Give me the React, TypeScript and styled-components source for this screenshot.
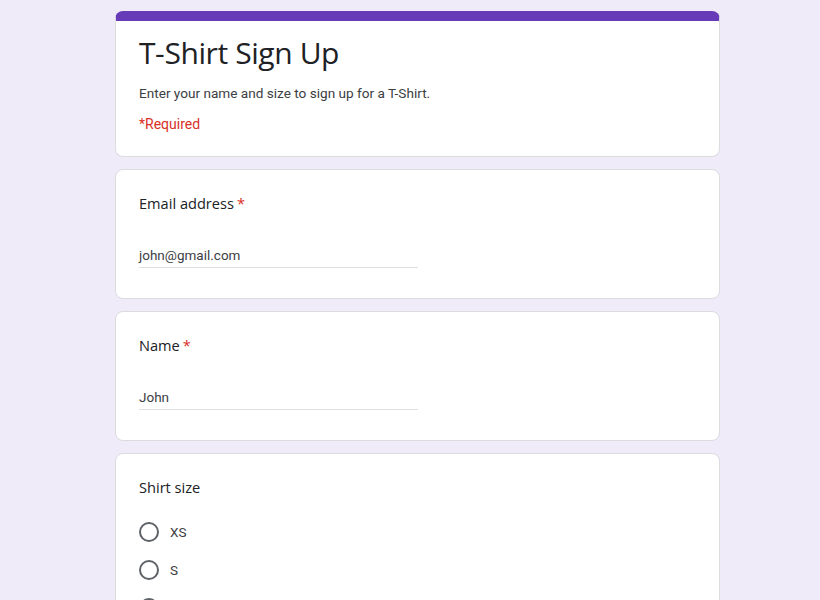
import React from "react";
import styled, { createGlobalStyle } from "styled-components";

const Global = createGlobalStyle`
  html, body { margin: 0; padding: 0; background: #f0ebf8; }
  body { font-family: Roboto, "Liberation Sans", sans-serif; color: #202124; }
`;

const Page = styled.div`
  display: flex;
  flex-direction: column;
  align-items: center;
  gap: 12px;
  padding: 11px 0 24px 15px;
  min-height: 600px;
  box-sizing: border-box;
`;

const Card = styled.div`
  width: 605px;
  box-sizing: border-box;
  background: #fff;
  border: 1px solid #dadce0;
  border-radius: 8px;
  padding: 21px 23px 30px;
`;

const HeaderCard = styled.div`
  width: 605px;
  box-sizing: border-box;
  background: #fff;
  border: 1px solid #dadce0;
  border-top: 10px solid #673ab7;
  border-radius: 8px;
  padding: 12px 23px 22px;
`;

const Title = styled.h1`
  margin: 0;
  font-family: "Open Sans", Roboto, sans-serif;
  font-weight: 400;
  font-size: 30px;
  line-height: 40px;
  letter-spacing: -0.4px;
  color: #202124;
`;

const Description = styled.p`
  margin: 10px 0 0;
  font-size: 13.6px;
  line-height: 20px;
  color: #3c4043;
`;

const Required = styled.p`
  margin: 11px 0 0;
  font-size: 14px;
  line-height: 20px;
  color: #d93025;
`;

const Label = styled.div`
  font-family: "Open Sans", Roboto, sans-serif;
  font-size: 14.6px;
  line-height: 24px;
  color: #202124;
`;

const Star = styled.span`
  color: #d93025;
  margin-left: 3px;
`;

const InputLine = styled.div`
  width: 50%;
  margin-top: 30px;
  font-size: 13.5px;
  line-height: 20px;
  color: #3c4043;
  padding-bottom: 2px;
  border-bottom: 1px solid #e0e0e0;
`;

const Options = styled.div`
  display: flex;
  flex-direction: column;
  margin-top: 14px;
`;

const OptionRow = styled.label`
  display: flex;
  align-items: center;
  height: 38px;
  gap: 11px;
  font-size: 13.5px;
  color: #3c4043;
`;

const Radio = styled.span`
  width: 20px;
  height: 20px;
  box-sizing: border-box;
  border: 2px solid #5f6368;
  border-radius: 50%;
  flex: none;
`;

const sizes = ["XS", "S", "M", "L", "XL"];

export default function App() {
  return (
    <>
      <Global />
      <Page>
        <HeaderCard>
          <Title>T-Shirt Sign Up</Title>
          <Description>Enter your name and size to sign up for a T-Shirt.</Description>
          <Required>*Required</Required>
        </HeaderCard>
        <Card>
          <Label>
            Email address<Star>*</Star>
          </Label>
          <InputLine>john@gmail.com</InputLine>
        </Card>
        <Card>
          <Label>
            Name<Star>*</Star>
          </Label>
          <InputLine>John</InputLine>
        </Card>
        <Card>
          <Label>Shirt size</Label>
          <Options>
            {sizes.map((s) => (
              <OptionRow key={s}>
                <Radio />
                {s}
              </OptionRow>
            ))}
          </Options>
        </Card>
      </Page>
    </>
  );
}
